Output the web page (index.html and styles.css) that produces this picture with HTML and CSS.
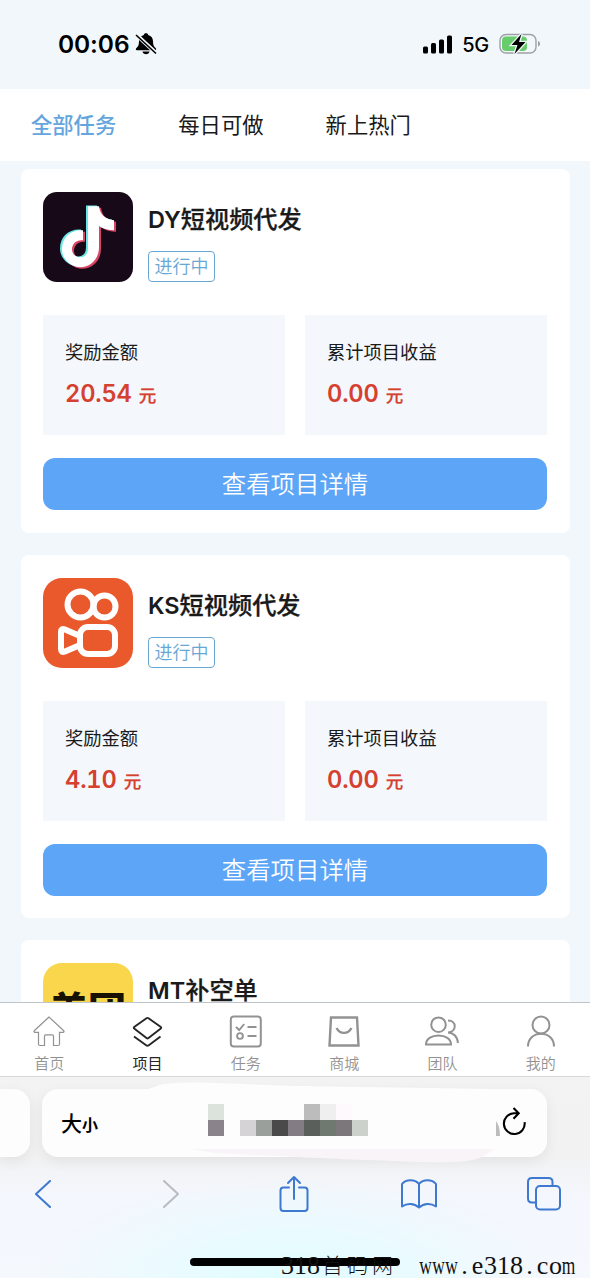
FILE: index.html
```html
<!DOCTYPE html>
<html lang="zh-CN">
<head>
<meta charset="utf-8">
<title>全部任务</title>
<link rel="stylesheet" href="styles.css">
</head>
<body>
<div class="screen">
  <header class="status">
    <div class="status-time">
      <span>00:06</span>
      <svg width="22" height="22" viewBox="0 0 22 22"><path d="M11 .3c1.300 0 2 .7 2.200 1.600 3.200.8 4.800 3.200 4.800 6.500 0 3.600 1 5.200 2.800 6.900.8.800.4 1.900-.8 1.900H2c-1.200 0-1.600-1.100-.8-1.900C3 13.600 4 12 4 8.400c0-3.300 1.600-5.700 4.800-6.500C9 1 9.700.3 11 .3Z"/><path d="M7.500 18.500h7c-.3 1.700-1.700 2.800-3.500 2.800s-3.200-1.100-3.500-2.800Z"/><path class="bell-gap" d="M1 1.500 21 20"/><path class="bell-slash" d="M1 2 21 20.500"/></svg>
    </div>
    <div class="status-right">
      <svg width="30" height="19" viewBox="0 0 30 19"><rect x="0" y="11.500" width="5" height="7" rx="1.500"/><rect x="8" y="8" width="5" height="10.500" rx="1.500"/><rect x="16" y="4.500" width="5" height="14" rx="1.500"/><rect x="24" y="0.500" width="5" height="18" rx="1.500"/></svg>
      <span class="network">5G</span>
      <svg class="battery" width="42" height="22" viewBox="0 0 42 22"><rect x="1" y="1.500" width="36" height="18.500" rx="6" fill="none" stroke="#9da1a4" stroke-width="1.400"/><rect x="3" y="3.500" width="25" height="14.500" rx="4" fill="#66cc6c"/><path d="M39 8v5.500c1.400-.5 2-1.500 2-2.800S40.400 8.500 39 8Z" fill="#9da1a4"/><path d="M22.500 1 12.500 12h6l-3 9 11-12h-6.500Z" fill="#000" stroke="#f1f7f8" stroke-width="2.600" paint-order="stroke"/></svg>
    </div>
  </header>

  <nav class="tabs">
    <span class="tab tab-active">全部任务</span>
    <span class="tab">每日可做</span>
    <span class="tab">新上热门</span>
  </nav>

  <main class="list">
    <article class="card">
      <div class="card-head">
        <svg class="logo" viewBox="0 0 90 90">
          <defs><path id="note" d="M44 14h11c1 8 6 13 15 14v10c-5 0-11-1.500-15-4.500v21.500c0 12-9 20-18.500 20S18 67 18 57c0-12 9-20 21-19v10c-6-1-11 3-11 9 0 4 3 8 8 8 5 0 8-3 8-9Z"/></defs>
          <rect width="90" height="90" rx="14" fill="#170918"/>
          <use href="#note" x="3" y="1.800" fill="#d94463"/><use href="#note" x="-1" y="-0.500" fill="#67e8e7"/><use href="#note" x="1" y="0.300" fill="#fff"/>
        </svg>
        <div class="card-title"><h2><span class="latin">DY</span>短视频代发</h2><span class="badge">进行中</span></div>
      </div>
      <div class="stats">
        <div class="stat"><span class="stat-label">奖励金额</span><strong>20.54 <small>元</small></strong></div>
        <div class="stat"><span class="stat-label">累计项目收益</span><strong>0.00 <small>元</small></strong></div>
      </div>
      <button class="detail">查看项目详情</button>
    </article>

    <article class="card">
      <div class="card-head">
        <svg class="logo" viewBox="0 0 90 90">
          <rect width="90" height="90" rx="19" fill="#e9592c"/>
          <g fill="none" stroke="#fff" stroke-width="6" stroke-linejoin="round"><circle cx="37.500" cy="26.500" r="13"/><circle cx="61.500" cy="28.500" r="11"/><rect x="37" y="49" width="35" height="27" rx="8"/><path d="M37 58 22 51.500q-4-1.500-4 2.500v17q0 4 4 2.500L37 67"/></g>
        </svg>
        <div class="card-title"><h2><span class="latin">KS</span>短视频代发</h2><span class="badge">进行中</span></div>
      </div>
      <div class="stats">
        <div class="stat"><span class="stat-label">奖励金额</span><strong>4.10 <small>元</small></strong></div>
        <div class="stat"><span class="stat-label">累计项目收益</span><strong>0.00 <small>元</small></strong></div>
      </div>
      <button class="detail">查看项目详情</button>
    </article>

    <article class="card">
      <div class="card-head">
        <div class="logo logo-mt">美团</div>
        <div class="card-title"><h2><span class="latin">MT</span>补空单</h2></div>
      </div>
    </article>
  </main>

  <nav class="tabbar">
    <a class="item"><svg viewBox="0 0 34 34"><path stroke-width="1.200" d="M17 2 2.500 15.500c-1 1-.5 1.800.5 1.800h3.500V29c0 1 .5 1.500 1.500 1.500h4.500V21c0-.8.400-1.200 1.200-1.200h6.600c.8 0 1.200.4 1.200 1.200v9.500H26c1 0 1.500-.5 1.500-1.500V17.300H31c1 0 1.500-.8.500-1.800Z"/></svg><span>首页</span></a>
    <a class="item item-active"><svg viewBox="0 0 34 34"><path stroke-width="1.900" d="M18.500 3.200 30.500 11.700q1.400 1 0 2L18.500 23q-1 .8-2 0L4.500 13.700q-1.400-1 0-2L16.500 3.200q1-.7 2 0M4 21.500l12.500 9q1 .6 2 0l12-9"/></svg><span>项目</span></a>
    <a class="item"><svg viewBox="0 0 34 34"><rect x="1.800" y="1.500" width="30" height="30" rx="3" stroke-width="2"/><path stroke-width="1.900" d="m7 12 3.200 3 5-6M18.500 12h9M18.500 21h9"/><circle cx="11" cy="21" r="2.900" stroke-width="1.900"/></svg><span>任务</span></a>
    <a class="item"><svg viewBox="0 0 34 34"><path stroke-width="2.400" d="M4 2.500h26l1.500 28h-29ZM9.500 13c3.500 6.500 11.500 6.500 15 0"/></svg><span>商城</span></a>
    <a class="item"><svg viewBox="0 0 34 34"><g stroke-width="2"><circle cx="13.500" cy="9.700" r="7.300"/><path d="M1 29.500C1 24 6.500 20.500 13.500 20.500S26 24 26 29.500ZM23 5.500c9 0 9 11.500 0 12 5 0 9.500 4 10 10.500"/></g></svg><span>团队</span></a>
    <a class="item"><svg viewBox="0 0 34 34"><g stroke-width="2"><circle cx="17" cy="10" r="8.500"/><path d="M4 31.500c0-7.500 5.500-12.800 13-12.800s13 5.300 13 12.800"/></g></svg><span>我的</span></a>
  </nav>

  <footer class="browser">
    <div class="address-row">
      <div class="address-prev"></div>
      <div class="address">
        <span class="text-size">大<small>小</small></span>
        <svg class="mosaic" width="160" height="32" viewBox="0 0 160 32" shape-rendering="crispEdges"><path fill="#dce2dc" d="M0 0h16v16H0z"/><path fill="#8b838b" d="M0 16h16v16H0z"/><path fill="#d5d3d6" d="M32 16h16v16H32z"/><path fill="#9b9f9b" d="M48 16h16v16H48z"/><path fill="#4a4a4a" d="M64 16h16v16H64z"/><path fill="#847c85" d="M80 16h16v16H80z"/><path fill="#bcbcbc" d="M96 0h16v16H96z"/><path fill="#5b5f5b" d="M96 16h16v16H96z"/><path fill="#efefef" d="M112 0h16v16h-16z"/><path fill="#707970" d="M112 16h16v16h-16z"/><path fill="#fdf9fd" d="M128 0h16v16h-16z"/><path fill="#7b777b" d="M128 16h16v16h-16z"/><path fill="#cdd1cc" d="M144 16h16v16h-16z"/></svg>
        <svg class="reload" width="32" height="32" viewBox="0 0 32 32"><path d="M0 15c2.500 3 4 8 4 15H0Z" fill="#bcbcbc"/><path d="M22 7.200h-4A10.400 10.400 0 1 0 28.600 16.200M17.500 2l5.200 5.200-5.200 5.500" fill="none" stroke="#000" stroke-width="2.100"/></svg>
      </div>
      <svg class="smudge" width="350" height="84" viewBox="0 0 350 84"><path d="M0 10 18 4C55 0 95 5 155 6l195 3v15H0Z" fill="#fdfdfd"/><path d="M45 69h305L337 77C320 86 260 81 220 80 160 78 120 75 70 73Z" fill="#f8f4f8"/></svg>
    </div>
    <div class="tools">
      <svg width="18" height="28" viewBox="0 0 18 28"><path d="M16 1 2 14l14 13"/></svg>
      <svg class="disabled" width="18" height="28" viewBox="0 0 18 28"><path d="m2 1 14 13L2 27"/></svg>
      <svg width="30" height="38" viewBox="0 0 30 38"><path d="M10 12.500H4.500q-3 0-3 3V33q0 3 3 3h21q3 0 3-3V15.500q0-3-3-3H20M15 24V2M9 8l6-6 6 6"/></svg>
      <svg width="36" height="32" viewBox="0 0 36 32"><path d="M18 6v23M18 6C14 1 5 1 1 6v22.500c5-3.500 12-3.500 17 1 5-4.500 12-4.500 17-1V6C31 1 22 1 18 6Z"/></svg>
      <svg width="34" height="34" viewBox="0 0 34 34"><rect x="9" y="9" width="24" height="23.500" rx="4"/><path d="M9 25.500H5q-4 0-4-4V5q0-4 4-4h16.500q4 0 4 4v4"/></svg>
    </div>
    <div class="home-bar"></div>
    <div class="watermark"><i>3</i><i>1</i><i>8</i><b>首</b><b>码</b><b>网</b><em></em><i class="wide">w</i><i class="wide">w</i><i class="wide">w</i><i>.</i><i>e</i><i>3</i><i>1</i><i>8</i><i>.</i><i>c</i><i>o</i><i class="wide">m</i></div>
  </footer>
</div>
</body>
</html>
```
FILE: styles.css
```css
* { box-sizing: border-box; }
body { margin: 0; font-family: Inter, "Noto Sans CJK SC", sans-serif; color: #1a1a1a; }
.screen { display: flex; flex-direction: column; width: 590px; height: 1278px; overflow: hidden; background: #f2f7fb; }
svg { display: block; flex: none; }

.status { height: 89px; flex: none; display: flex; justify-content: space-between; padding: 0 49px 0 58px; color: #000; }
.status-time, .status-right { display: flex; align-items: center; height: 88px; }
.status-time { font-size: 24.500px; font-weight: 600; gap: 6px; letter-spacing: -0.1px; }
.bell-gap { stroke: #f2f7fb; stroke-width: 4; }
.bell-slash { stroke: #000; stroke-width: 1.6; }
.network { font-size: 20px; font-weight: 500; margin: 2px 10px 0 9px; letter-spacing: -0.3px; }

.tabs { height: 72px; flex: none; display: flex; align-items: center; gap: 62px; padding: 0 31px 4px; background: #fff; font-size: 21.300px; }
.tab { width: 85.300px; white-space: nowrap; font-family: "Noto Sans CJK SC", sans-serif; font-weight: 400; }
.tab-active { color: #64a5dd; font-weight: 500; }

.list { flex: 1; min-height: 0; overflow: hidden; display: flex; flex-direction: column; gap: 22px; padding: 8px 20.500px 0 21px; }
.card { flex: none; height: 363.500px; padding: 23px 22.500px 23px 22px; background: #fff; border-radius: 8px; }
.card-head { display: flex; gap: 15px; height: 90px; }
.logo { width: 90px; height: 90px; flex: none; }
.logo-mt { background: #f9d64b; border-radius: 19px; color: #181100; font: 900 38px/90px "Noto Sans CJK SC", sans-serif; text-align: center; overflow: hidden; }
.card-title { display: flex; flex-direction: column; align-items: flex-start; justify-content: space-between; padding-top: 9px; }
h2 { margin: 0; font-size: 24.200px; line-height: 38px; font-weight: 500; white-space: nowrap; -webkit-text-stroke: 0.25px currentColor; }
.latin { font-size: 23.500px; font-weight: 600; -webkit-text-stroke: 0; }
.badge { height: 31px; width: 67px; border: 1.500px solid #68a7d4; border-radius: 4px; color: #68a7d4; font-size: 18px; line-height: 30px; text-align: center; font-weight: 350; }
.stats { display: grid; grid-template-columns: 1fr 1fr; gap: 20px; margin-top: 33px; }
.stat { height: 120px; padding: 23px 22px; background: #f4f7fb; display: flex; flex-direction: column; }
.stat-label { font-size: 18.300px; line-height: 28px; font-weight: 400; }
.stat strong { margin-top: 13px; font-size: 23.700px; line-height: 30px; font-weight: 600; font-variant-numeric: tabular-nums; letter-spacing: -0.2px; color: #d5402f; }
.stat small { font-size: 17.500px; font-weight: 500; margin-left: 1px; -webkit-text-stroke: 0.25px currentColor; }
.detail { display: block; width: 100%; height: 52px; margin-top: 23px; padding: 0 0 3px; border: 0; border-radius: 12px; background: #5ca5f7; color: #fff; font: 350 24.400px/49px "Noto Sans CJK SC", sans-serif; }

.tabbar { flex: none; height: 75px; display: grid; grid-template-columns: repeat(6, 1fr); background: #fff; border-top: 1px solid #bdc5cb; border-bottom: 1px solid #d8d8d8; }
.item { display: flex; flex-direction: column; align-items: center; padding-top: 12px; color: #929292; font-size: 15px; line-height: 22px; font-weight: 350; }
.item svg { width: 34px; height: 34px; fill: none; stroke: currentColor; }
.item span { margin-top: 4px; }
.item-active { color: #252525; font-weight: 400; }

.browser { position: relative; flex: none; height: 201px; background: radial-gradient(ellipse 260px 100px at 50% 100%, #e0fdff, rgba(232, 253, 255, 0) 100%), linear-gradient(#f3f3f3 0, #f2f2f3 40%, #f4f7fd 60%, #f5f8fd 100%); }
.address-row { position: relative; display: flex; gap: 12px; padding-top: 12px; }
.address-prev { width: 30px; height: 68px; background: #fdfdfd; border-radius: 0 16px 16px 0; box-shadow: 0 4px 14px rgba(0, 0, 0, .07); }
.address { position: relative; z-index: 1; width: 505px; height: 68px; display: flex; align-items: center; padding: 0 19px; background: #fdfdfd; border-radius: 16px; box-shadow: 0 4px 14px rgba(0, 0, 0, .07); }
.text-size { width: 147px; padding-bottom: 3px; font-family: "Noto Sans CJK SC", sans-serif; font-size: 21px; font-weight: 500; color: #000; }
.text-size small { font-size: 16px; font-weight: 700; }
.mosaic { margin-top: -6px; }
.reload { margin: -3px 0 0 128px; }
.smudge { position: absolute; left: 145px; top: 3px; z-index: 2; }
.tools { display: grid; grid-template-columns: 128px 117px 122px 126px 34px; align-items: center; height: 38px; margin-top: 18px; padding-left: 34px; }
.tools svg { fill: none; stroke: #3d79d0; stroke-width: 2; stroke-linejoin: round; stroke-linecap: round; }
.tools .disabled { stroke: #b9bbc1; }
.home-bar { position: absolute; left: 190px; top: 181px; width: 210px; height: 8px; border-radius: 4px; background: #000; }
.watermark { position: absolute; left: 281px; top: 173px; display: flex; height: 28px; font: 26px/32px "Liberation Serif", serif; color: #111; }
.watermark i { width: 13px; display: flex; justify-content: center; font-style: normal; }
.watermark .wide { transform: scaleX(.67); }
.watermark b { width: 25px; text-align: center; font: 300 21px/29px "Noto Sans CJK SC", sans-serif; }
.watermark em { width: 24px; }
```
